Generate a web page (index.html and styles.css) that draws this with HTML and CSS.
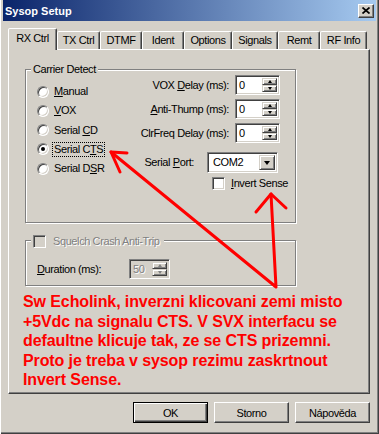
FILE: index.html
```html
<!DOCTYPE html>
<html lang="cs">
<head>
  <meta charset="UTF-8" />
  <title>Sysop Setup</title>
  <link rel="stylesheet" href="styles.css">
</head>
<body>
  <div class="window">
    <!-- Title bar -->
    <div class="titlebar">
      <span class="title">Sysop Setup</span>
      <span class="close">
        <svg width="8" height="7" viewBox="0 0 8 7"><path d="M0.5 0.5L7.5 6.5M7.5 0.5L0.5 6.5" stroke="#000" stroke-width="1.7"/></svg>
      </span>
    </div>

    <div class="dialog">
      <div class="tabs">
        <div class="tab tab-rx active">RX Ctrl</div>
        <div class="tab tab-tx">TX Ctrl</div>
        <div class="tab tab-dtmf">DTMF</div>
        <div class="tab tab-ident">Ident</div>
        <div class="tab tab-options">Options</div>
        <div class="tab tab-signals">Signals</div>
        <div class="tab tab-remt">Remt</div>
        <div class="tab tab-rf">RF Info</div>
      </div>

      <div class="panel">
        <!-- Carrier Detect -->
        <div class="group carrier">
          <div class="col-left">
            <div class="group-title">Carrier Detect</div>
            <ul class="radios">
              <li><span class="radio"></span><span class="lbl"><u>M</u>anual</span></li>
              <li><span class="radio"></span><span class="lbl"><u>V</u>OX</span></li>
              <li><span class="radio"></span><span class="lbl">Serial <u>C</u>D</span></li>
              <li><span class="radio on"></span><span class="lbl focus">Serial C<u>T</u>S</span></li>
              <li><span class="radio"></span><span class="lbl">Serial D<u>S</u>R</span></li>
            </ul>
          </div>
          <div class="col-right">
            <div class="field">
              <span class="lbl">VOX <u>D</u>elay (ms):</span>
              <span class="edit"><span class="val">0</span><span class="spin"><i class="up"></i><i class="down"></i></span></span>
            </div>
            <div class="field">
              <span class="lbl"><u>A</u>nti-Thump (ms):</span>
              <span class="edit"><span class="val">0</span><span class="spin"><i class="up"></i><i class="down"></i></span></span>
            </div>
            <div class="field">
              <span class="lbl">ClrFreq Delay (ms):</span>
              <span class="edit"><span class="val">0</span><span class="spin"><i class="up"></i><i class="down"></i></span></span>
            </div>
            <div class="field port">
              <span class="lbl">Serial <u>P</u>ort:</span>
              <span class="combo"><span class="val">COM2</span><span class="drop"></span></span>
            </div>
            <div class="field invert">
              <span class="check"></span>
              <span class="lbl"><u>I</u>nvert Sense</span>
            </div>
          </div>
        </div>

        <!-- Squelch Crash -->
        <div class="group squelch">
          <div class="group-title flex-title">
            <span class="check disabled"></span>
            <span class="lbl dim">Squelch Crash Anti-Trip</span>
          </div>
          <div class="field duration">
            <span class="lbl"><u>D</u>uration (ms):</span>
            <span class="edit small disabled"><span class="val dim">50</span><span class="spin"><i class="up"></i><i class="down"></i></span></span>
          </div>
        </div>

        <p class="note">Sw Echolink, inverzni klicovani zemi misto<br>+5Vdc na signalu CTS. V SVX interfacu se<br>defaultne klicuje tak, ze se CTS prizemni.<br>Proto je treba v sysop rezimu zaskrtnout<br>Invert Sense.</p>
      </div>

      <div class="buttons">
        <button class="btn default">OK</button>
        <button class="btn">Storno</button>
        <button class="btn">Nápověda</button>
      </div>
    </div>

    <!-- hand-drawn annotation arrows -->
    <svg class="arrows" width="379" height="434" viewBox="0 0 379 434">
      <g fill="none" stroke="#f00" stroke-width="3" stroke-linecap="round" stroke-linejoin="round">
        <polyline points="111,152 276,287 271,194"/>
        <polyline points="127,153 111,152 120,172"/>
        <polyline points="256,212 271,194 286,208"/>
      </g>
    </svg>
  </div>
</body>
</html>
```

FILE: styles.css
```css
* {
  margin: 0;
  padding: 0;
  box-sizing: border-box;
}
body {
  background: #d4d0c8;
  font-family: 'Liberation Sans', Arial, sans-serif;
  font-size: 11px;
  letter-spacing: -0.4px;
  color: #000;
}

.window {
  position: relative;
  width: 379px;
  height: 434px;
  background: #d4d0c8;
  box-shadow: inset 1px 0 #fff, inset -1px -1px #404040, inset -2px -2px #808080;
}

/* Title bar */
.titlebar {
  height: 21px;
  margin: 0 3px;
  padding: 0 2px;
  display: flex;
  align-items: center;
  justify-content: space-between;
  background: linear-gradient(to right, #0a246a, #a6caf0);
  color: #fff;
  font-weight: 700;
  letter-spacing: 0;
}
.close {
  width: 16px;
  height: 14px;
  display: flex;
  align-items: center;
  justify-content: center;
  background: #d4d0c8;
  border: 1px solid;
  border-color: #fff #404040 #404040 #fff;
  box-shadow: inset -1px -1px #808080;
}

.dialog {
  padding-left: 8px;
}

/* Tabs */
.tabs {
  display: flex;
  align-items: flex-end;
  margin: 7px 0 -1px;
  position: relative;
  z-index: 1;
}
.tab {
  height: 18px;
  margin-bottom: 1px;
  border: 1px solid;
  border-bottom: none;
  border-color: #fff #404040 transparent #fff;
  border-radius: 2px 2px 0 0;
  box-shadow: inset -1px 0 #808080;
  background: #d4d0c8;
  text-align: center;
  line-height: 17px;
  white-space: nowrap;
}
.tab.active {
  height: 22px;
  margin-bottom: 0;
  line-height: 18px;
}
.tab-rx { width: 49px; }
.tab-tx { width: 43px; }
.tab-dtmf { width: 42px; }
.tab-ident { width: 42px; }
.tab-options { width: 48px; }
.tab-signals { width: 46px; }
.tab-remt { width: 42px; }
.tab-rf { width: 47px; }

.panel {
  width: 362px;
  height: 345px;
  border: 1px solid;
  border-color: #fff #404040 #404040 #fff;
  box-shadow: inset -1px -1px #808080;
}

/* Group boxes */
.group {
  border: 1px solid #808080;
  box-shadow: inset 1px 1px #fff, 1px 1px #fff;
  width: 271px;
  margin-left: 16px;
}
.group-title {
  display: table;
  margin: -7px 0 0 5px;
  padding: 0 2px;
  line-height: 13px;
  background: #d4d0c8;
}
.carrier {
  display: flex;
  height: 154px;
  margin-top: 19px;
}
.col-left {
  width: 114px;
  flex-shrink: 0;
}
.radios {
  list-style: none;
  margin-top: 6px;
  padding-left: 11px;
}
.radios li {
  display: flex;
  align-items: center;
  height: 19.25px;
}
.lbl {
  padding: 0 1px;
  border: 1px dotted transparent;
  line-height: 13px;
  white-space: nowrap;
}
.lbl.focus {
  border-color: #000;
}
.radio {
  flex-shrink: 0;
  width: 12px;
  height: 12px;
  margin-right: 3px;
  display: flex;
  align-items: center;
  justify-content: center;
  border-radius: 50%;
  background: #fff;
  border: 1px solid;
  border-color: #808080 #fff #fff #808080;
  box-shadow: inset 1px 1px #404040, inset -1px -1px #d4d0c8;
}
.radio.on::after {
  content: "";
  width: 4px;
  height: 4px;
  border-radius: 50%;
  background: #000;
}

.col-right {
  width: 140px;
  flex-shrink: 0;
  padding-top: 5px;
  display: flex;
  flex-direction: column;
  align-items: flex-end;
  gap: 4px;
}
.field {
  display: flex;
  align-items: center;
  height: 20px;
}
.field .lbl {
  margin-right: 4px;
}
.field.port {
  height: 21px;
  margin: 5px 2px 0 0;
}
.field.port .lbl {
  margin-right: 11px;
}
.field.invert {
  height: 13px;
  align-self: flex-start;
  margin-left: 72px;
}
.field.invert .lbl {
  margin: 0 0 0 4px;
}

/* Controls */
.edit,
.combo {
  flex-shrink: 0;
  display: flex;
  height: 20px;
  width: 45px;
  padding: 2px;
  background: #fff;
  border: 1px solid;
  border-color: #808080 #fff #fff #808080;
  box-shadow: inset 1px 1px #404040, inset -1px -1px #d4d0c8;
}
.val {
  flex: 1;
  padding-left: 1px;
  line-height: 14px;
}
.spin {
  width: 15px;
  display: flex;
  flex-direction: column;
}
.spin i,
.drop {
  flex: 1;
  display: flex;
  align-items: center;
  justify-content: center;
  background: #d4d0c8;
  border: 1px solid;
  border-color: #d4d0c8 #404040 #404040 #d4d0c8;
  box-shadow: inset 1px 1px #fff, inset -1px -1px #808080;
}
.spin i::after {
  content: "";
  border-left: 2.5px solid transparent;
  border-right: 2.5px solid transparent;
}
.spin .up::after {
  border-bottom: 3px solid #000;
}
.spin .down::after {
  border-top: 3px solid #000;
}
.combo {
  width: 71px;
  height: 21px;
}
.combo .val {
  padding-left: 3px;
  line-height: 15px;
}
.drop {
  flex: 0 0 16px;
}
.drop::after {
  content: "";
  border-left: 3.5px solid transparent;
  border-right: 3.5px solid transparent;
  border-top: 4px solid #000;
}
.check {
  flex-shrink: 0;
  width: 13px;
  height: 13px;
  background: #fff;
  border: 1px solid;
  border-color: #808080 #fff #fff #808080;
  box-shadow: inset 1px 1px #404040, inset -1px -1px #d4d0c8;
}
.check.disabled,
.edit.disabled {
  background: #d4d0c8;
}
.dim {
  color: #808080;
  text-shadow: 1px 1px #fff;
}
.edit.disabled .spin i::after {
  border-bottom-color: #808080;
  border-top-color: #808080;
}

/* Squelch group */
.squelch {
  height: 46px;
  margin-top: 17px;
}
.flex-title {
  display: flex;
  align-items: center;
  width: max-content;
}
.flex-title .lbl {
  margin-left: 5px;
}
.duration {
  margin: 10px 0 0 9px;
}
.duration .lbl {
  width: 94px;
  margin-right: 0;
}
.edit.small {
  width: 41px;
}

/* Annotation */
.note {
  margin: 6px 0 0 14px;
  color: #f00;
  font-weight: 700;
  font-size: 16px;
  line-height: 19.5px;
  letter-spacing: -0.1px;
  white-space: nowrap;
}

/* Buttons */
.buttons {
  width: 362px;
  margin-top: 8px;
  display: flex;
  justify-content: flex-end;
  gap: 6px;
}
.btn {
  width: 75px;
  height: 21px;
  font: inherit;
  letter-spacing: inherit;
  color: #000;
  background: #d4d0c8;
  border: 1px solid;
  border-color: #fff #404040 #404040 #fff;
  box-shadow: inset -1px -1px #808080;
}
.btn.default {
  border-color: #000;
  box-shadow: inset 1px 1px #fff, inset -1px -1px #404040, inset -2px -2px #808080;
}

.arrows {
  position: absolute;
  top: 0;
  left: 0;
  pointer-events: none;
}
```
